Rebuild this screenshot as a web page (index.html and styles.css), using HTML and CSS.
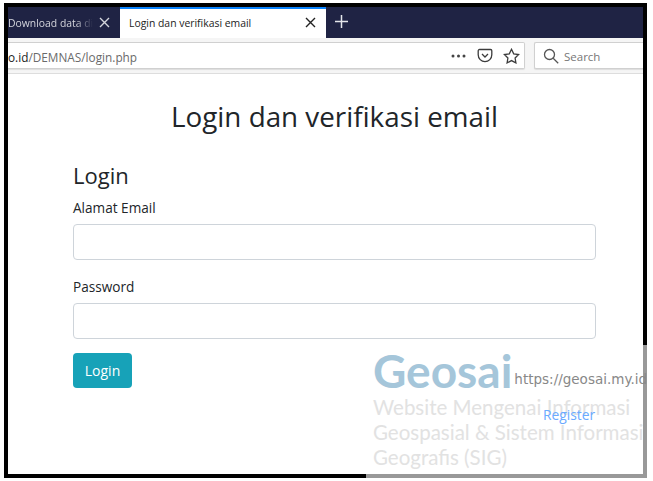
FILE: index.html
```html
<!DOCTYPE html>
<html>
<head>
    <title>Login dan verifikasi email</title>
    <link rel="stylesheet" href="styles.css">
</head>
<body>
    <div class="frame">
        <div class="tabbar">
            <div class="tab">
                <span class="tab-title">Download data di</span>
                <svg class="tab-close" width="11" height="11" viewBox="0 0 11 11"><path d="M1 1l9 9M10 1l-9 9"/></svg>
            </div>
            <div class="tab active">
                <span class="tab-title">Login dan verifikasi email</span>
                <svg class="tab-close" width="11" height="11" viewBox="0 0 11 11"><path d="M1 1l9 9M10 1l-9 9"/></svg>
            </div>
            <svg class="new-tab" width="15" height="15" viewBox="0 0 15 15"><path d="M7.5 1v13M1 7.5h13"/></svg>
        </div>
        <div class="toolbar">
            <div class="urlbar">
                <span class="url"><b>o.id</b>/DEMNAS/login.php</span>
                <svg class="more" width="15" height="4" viewBox="0 0 15 4"><circle cx="2" cy="2" r="1.500"/><circle cx="7.500" cy="2" r="1.500"/><circle cx="13" cy="2" r="1.500"/></svg>
                <svg class="tool-icon" width="16" height="15" viewBox="0 0 16 15"><path d="M2.500 1.500h11a1.300 1.300 0 0 1 1.300 1.300v4a6.800 6.800 0 0 1-13.600 0v-4a1.300 1.300 0 0 1 1.300-1.300zM5 6l3 3 3-3"/></svg>
                <svg class="tool-icon" width="17" height="16" viewBox="0 0 17 16"><path d="M8.500 1.300l2.200 4.500 4.900.7-3.500 3.500.8 4.900-4.400-2.300-4.400 2.300.8-4.900-3.500-3.500 4.900-.7z"/></svg>
            </div>
            <div class="searchbar">
                <svg class="search-icon" width="16" height="16" viewBox="0 0 16 16"><circle cx="6.500" cy="6.500" r="5"/><path d="M10.200 10.200l5 5"/></svg>
                <span class="search-text">Search</span>
            </div>
        </div>
        <div class="page">
            <h1>Login dan verifikasi email</h1>
            <h2>Login</h2>
            <form class="login-form">
                <label>Alamat Email</label>
                <input class="field" type="text">
                <label>Password</label>
                <input class="field" type="password">
                <button class="btn" type="button">Login</button>
            </form>
            <a class="register" href="#">Register</a>
        </div>
    </div>
    <div class="watermark">
        <div class="wm-head">
            <span class="wm-name">Geosai</span>
            <span class="wm-url">https://geosai.my.id</span>
        </div>
        <p class="wm-text">Website Mengenai Informasi Geospasial &amp; Sistem Informasi Geografis (SIG)</p>
    </div>
</body>
</html>
```

FILE: styles.css
```css
html, body {
    margin: 0;
    height: 481px;
    overflow: hidden;
    background: #fff;
    font-family: "Open Sans", "Noto Sans", sans-serif;
}

body {
    position: relative;
    padding: 3px 6px 3px 4px;
    box-sizing: border-box;
}

.frame {
    height: 100%;
    box-sizing: border-box;
    border: 4px solid #000;
    overflow: hidden;
    display: flex;
    flex-direction: column;
    background: #fff;
}

/* Tabs */
.tabbar {
    height: 31px;
    flex: none;
    background: #1f2344;
    display: flex;
    align-items: stretch;
}

.tab {
    display: flex;
    align-items: center;
    justify-content: space-between;
    box-sizing: border-box;
    width: 112px;
    padding: 0 10px 0 0;
    color: #d4d5dc;
    font-size: 10.400px;
    white-space: nowrap;
}

.tab:not(.active) .tab-title {
    -webkit-mask-image: linear-gradient(to right, #000 80%, transparent 100%);
    mask-image: linear-gradient(to right, #000 80%, transparent 100%);
}

.tab-close {
    flex: none;
    fill: none;
    stroke: currentColor;
    stroke-width: 1.400;
}

.tab.active {
    width: 206px;
    padding: 0 10px 2px 9px;
    background: #fff;
    color: #222;
    border-top: 2px solid #0a84ff;
}

.new-tab {
    margin: 7px 0 0 8px;
    fill: none;
    stroke: #e4e5ea;
    stroke-width: 1.500;
}

/* Toolbar */
.toolbar {
    height: 36px;
    flex: none;
    box-sizing: border-box;
    background: #f5f5f5;
    border-bottom: 1px solid #ddd;
    padding: 4px 0 4px;
    display: flex;
    gap: 9px;
}

.urlbar, .searchbar {
    background: #fff;
    border: 1px solid #d0d0d0;
    border-left: 0;
    display: flex;
    align-items: center;
    font-size: 12px;
    color: #6a6a6a;
    box-shadow: 0 1px 1px #ddd;
}

.urlbar {
    width: 517px;
    flex: none;
    padding-right: 4px;
    border-radius: 0 2px 2px 0;
    box-sizing: border-box;
}

.url {
    flex: 1;
    padding-top: 2px;
    font-size: 11.800px;
    white-space: nowrap;
}

.url b {
    color: #222;
    font-weight: 400;
}

.more {
    fill: #444;
    margin-right: 1px;
}

.tool-icon {
    fill: none;
    stroke: #3c3c3c;
    stroke-width: 1.300;
    margin-left: 10px;
}

.searchbar {
    flex: 1;
    gap: 5px;
    padding-left: 8px;
    border-left: 1px solid #d0d0d0;
    border-right: 0;
    border-radius: 2px 0 0 2px;
    font-size: 11.500px;
    color: #777;
}

.search-text {
    padding-top: 2px;
}

.search-icon {
    fill: none;
    stroke: #555;
    stroke-width: 1.300;
}

/* Page */
.page {
    flex: 1;
    position: relative;
    padding: 0 47px 0 65px;
    color: #212529;
}

h1 {
    margin: 22px 0 0;
    text-align: center;
    font-size: 27.800px;
    font-weight: 400;
    line-height: 40px;
}

h2 {
    margin: 24px 0 8px;
    font-size: 22px;
    font-weight: 400;
    line-height: 30px;
}

.login-form {
    display: flex;
    flex-direction: column;
    align-items: flex-start;
}

label {
    font-size: 13.600px;
    line-height: 20px;
    margin-top: 3px;
}

.login-form label:first-child {
    margin-top: 0;
}

.field {
    display: block;
    width: 100%;
    height: 36px;
    box-sizing: border-box;
    margin: 6px 0 14px;
    border: 1px solid #ced4da;
    border-radius: 4px;
    background: #fff;
}

.btn {
    width: 59px;
    height: 35px;
    border: 0;
    border-radius: 4px;
    background: #17a2b8;
    color: #fff;
    font: 14px "Open Sans", "Noto Sans", sans-serif;
}

.register {
    position: absolute;
    z-index: 1;
    left: 535px;
    top: 331px;
    font-size: 13.800px;
    color: #6aaaff;
    text-decoration: none;
}

/* Watermark sits over the page */
.watermark {
    position: absolute;
    left: 366px;
    top: 345px;
    width: 281px;
    height: 133px;
    box-sizing: border-box;
    padding: 0 0 0 7px;
    overflow: hidden;
    background: rgba(255, 255, 255, 0.6);
    font-family: "Lato", "Open Sans", sans-serif;
}

.wm-head {
    display: flex;
    align-items: flex-end;
    height: 52px;
}

.wm-name {
    font-size: 46px;
    font-weight: 700;
    line-height: 52px;
    color: #a5c6da;
}

.wm-url {
    margin: 0 0 10px 2px;
    font: 13.500px "DejaVu Sans", sans-serif;
    color: #888;
    white-space: nowrap;
}

.wm-text {
    margin: -2px 0 0;
    width: 290px;
    font-size: 20.500px;
    line-height: 25px;
    color: #e2e2e2;
}
```
